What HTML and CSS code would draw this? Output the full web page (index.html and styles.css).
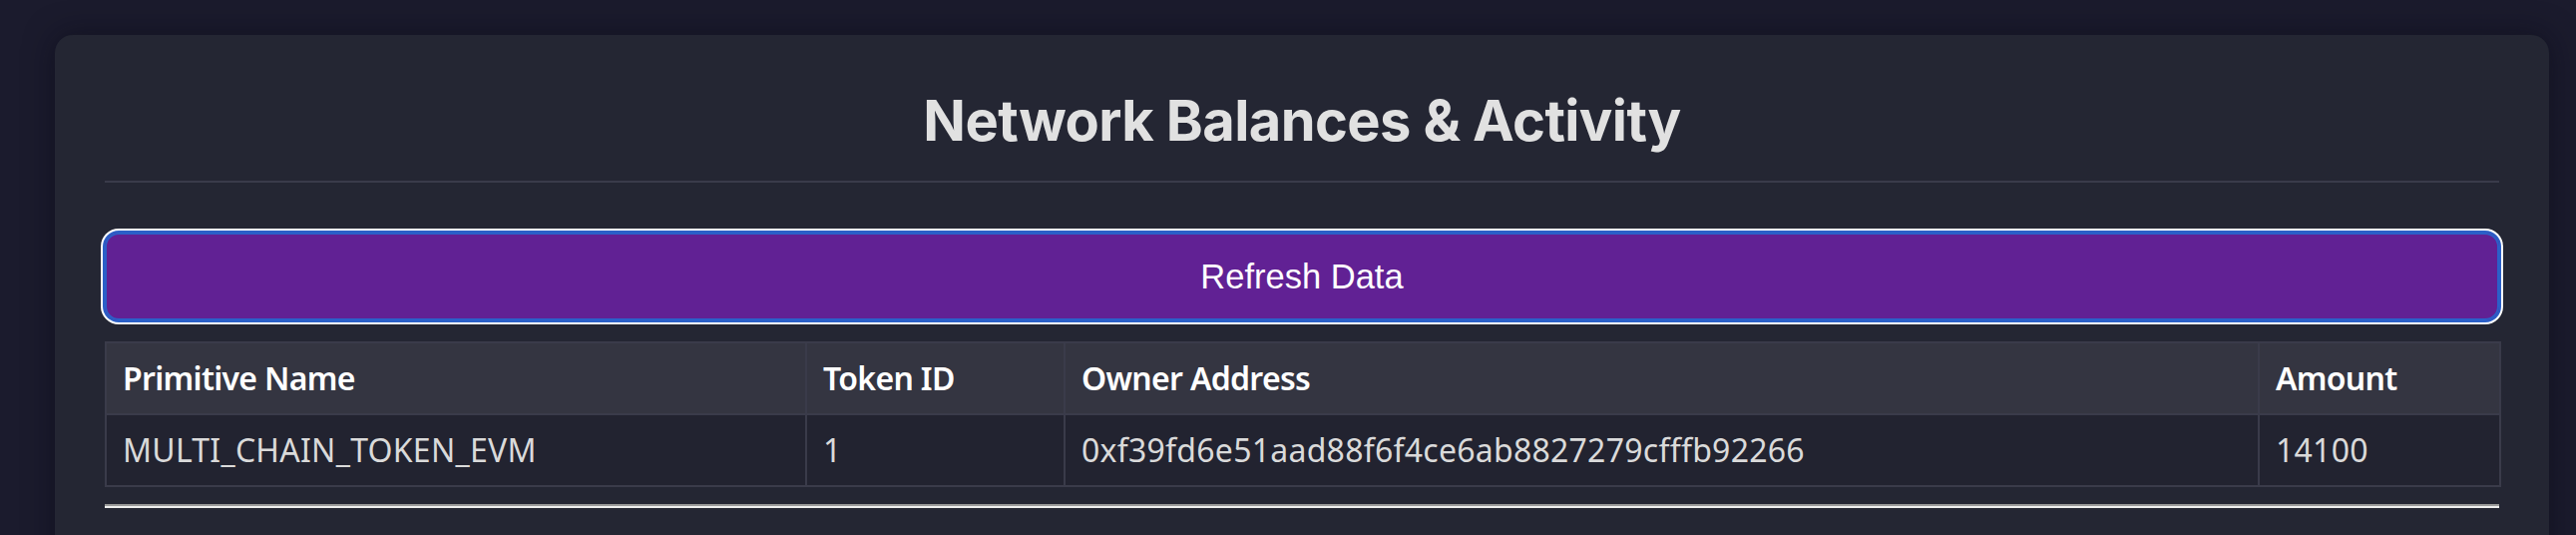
FILE: index.html
```html
<!DOCTYPE html>
<html lang="en">
<head>
<meta charset="utf-8">
<title>Network Balances &amp; Activity</title>
<link rel="stylesheet" href="styles.css">
</head>
<body>
<div class="card">
  <h2 class="title">Network Balances &amp; Activity</h2>
  <button class="refresh" type="button">Refresh Data</button>
  <table class="balances">
    <thead>
      <tr>
        <th class="col-name">Primitive Name</th>
        <th class="col-id">Token ID</th>
        <th class="col-owner">Owner Address</th>
        <th class="col-amount">Amount</th>
      </tr>
    </thead>
    <tbody>
      <tr>
        <td>MULTI_CHAIN_TOKEN_EVM</td>
        <td>1</td>
        <td>0xf39fd6e51aad88f6f4ce6ab8827279cfffb92266</td>
        <td>14100</td>
      </tr>
    </tbody>
  </table>
  <hr class="rule">
</div>
</body>
</html>
```
FILE: styles.css
```css
html, body {
  margin: 0;
  padding: 0;
  background: #1b1b2d;
}
body {
  padding: 35px 0 0 55px;
  overflow: hidden;
}
.card {
  box-sizing: border-box;
  width: 2500px;
  padding: 52px 50px 80px;
  background: #242633;
  border-radius: 18px;
  box-shadow: 0 0 30px rgba(10, 10, 22, 0.55);
}
.title {
  margin: 0;
  padding-bottom: 26px;
  border-bottom: 2px solid #3a3b4a;
  font-family: Inter, "Liberation Sans", sans-serif;
  font-weight: 700;
  font-size: 56px;
  letter-spacing: -0.6px;
  line-height: 68px;
  color: #e1e1e1;
  text-align: center;
}
.refresh {
  display: block;
  box-sizing: border-box;
  width: 100%;
  margin: 50px 0 0;
  padding: 26px 0;
  border: 0;
  border-radius: 14px;
  background: #612194;
  color: #ffffff;
  font-family: "Liberation Sans", Arial, sans-serif;
  font-size: 34.5px;
  line-height: 36px;
  box-shadow: inset 0 0 0 2px #2b60c8, 0 0 0 2px #2b60c8, 0 0 0 4px #ffffff;
}
.balances {
  width: 2400px;
  margin-top: 21px;
  border-collapse: collapse;
  table-layout: fixed;
  font-family: "Noto Sans", "Open Sans", sans-serif;
  font-size: 32px;
}
.balances th,
.balances td {
  box-sizing: border-box;
  border: 2px solid #3a3b4a;
  padding: 13px 16px;
  text-align: left;
  line-height: 44px;
  white-space: nowrap;
}
.balances th {
  background: #343541;
  color: #ffffff;
  font-weight: 600;
  letter-spacing: -0.7px;
}
.balances td {
  background: #222330;
  color: #dadada;
  font-weight: 400;
  letter-spacing: 0.25px;
}
.col-name { width: 702px; }
.col-id { width: 259px; }
.col-owner { width: 1197px; }
.col-amount { width: 242px; }
.rule {
  margin: 17px 0 0;
  height: 0;
  border: 0;
  border-top: 2px solid #9a9a9a;
  border-bottom: 2px solid #eeeeee;
}
```
